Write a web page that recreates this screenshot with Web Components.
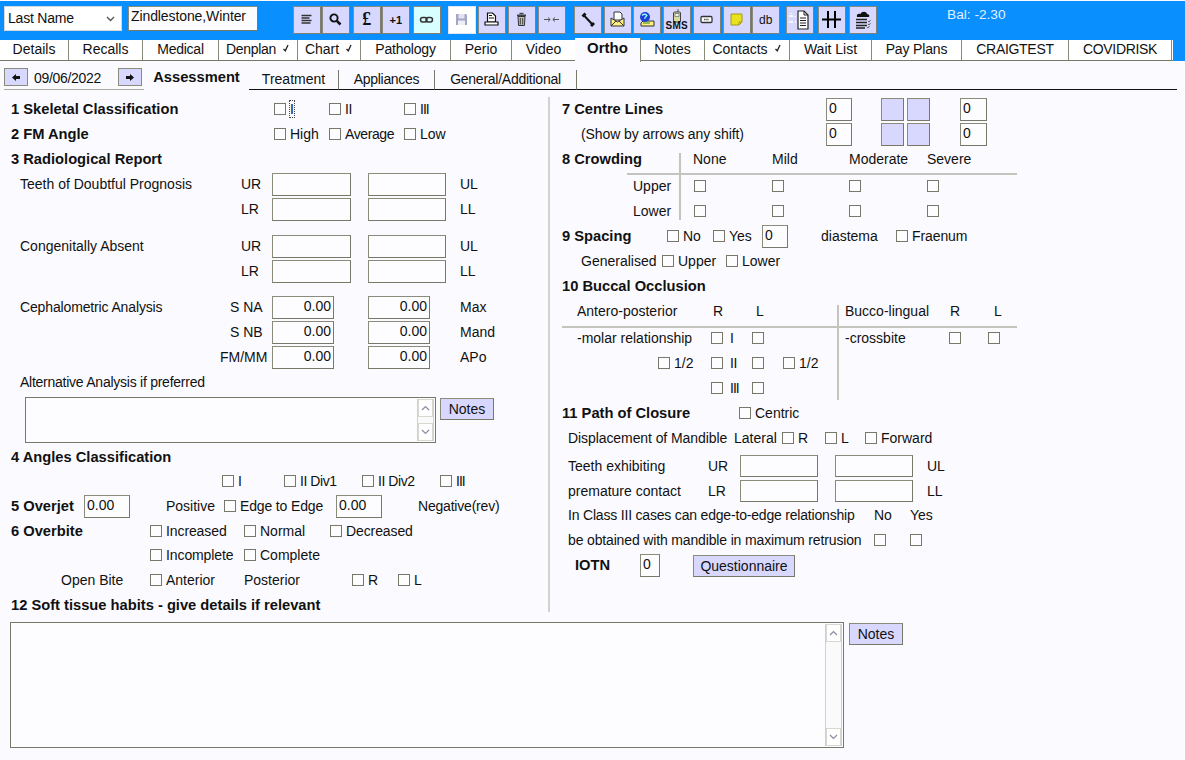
<!DOCTYPE html>
<html lang="en"><head><meta charset="utf-8"><title>Ortho</title>
<style>
html,body{margin:0;padding:0;background:#fbfbff;overflow:hidden}
body{font:14px "Liberation Sans",Arial,sans-serif;color:#111;width:1185px;height:760px}
b{font-weight:bold;font-size:14.7px}
</style></head><body>
<dental-app>
  <top-bar slot="top">
    <select-box style="width:118px;letter-spacing:-.2px">Last Name</select-box>
    <text-field w="130" h="25" style="margin-left:6px;letter-spacing:-.1px">Zindlestone,Winter</text-field>
    <tool-btn icon="lines" style="margin-left:35px"></tool-btn>
    <tool-btn icon="search" style="margin-left:1.5px"></tool-btn>
    <tool-btn style="margin-left:3.5px"><span style="font:bold 18px 'Liberation Serif',serif">£</span></tool-btn>
    <tool-btn style="margin-left:1.5px"><span style="font:bold 11px 'Liberation Sans',sans-serif">+1</span></tool-btn>
    <tool-btn icon="link" tone="cyan" style="margin-left:3.5px"></tool-btn>
    <tool-btn icon="save" tone="white" style="margin-left:7.5px"></tool-btn>
    <tool-btn icon="print" style="margin-left:2.5px"></tool-btn>
    <tool-btn icon="trash" style="margin-left:2.5px"></tool-btn>
    <tool-btn icon="arrows" style="margin-left:2.5px"></tool-btn>
    <tool-btn icon="phone" style="margin-left:8.5px"></tool-btn>
    <tool-btn icon="mail" style="margin-left:2.5px"></tool-btn>
    <tool-btn icon="web" style="margin-left:1.5px"></tool-btn>
    <tool-btn icon="sms" style="margin-left:2.5px"><span style="font:bold 10px 'Liberation Sans',sans-serif;margin-top:-3px;letter-spacing:.3px">SMS</span></tool-btn>
    <tool-btn icon="key" style="margin-left:2.5px"></tool-btn>
    <tool-btn icon="note" style="margin-left:2.5px"></tool-btn>
    <tool-btn style="margin-left:1.5px"><span style="font:12px 'Liberation Sans',sans-serif">db</span></tool-btn>
    <tool-btn icon="doc" style="margin-left:6.5px"></tool-btn>
    <tool-btn icon="hash" style="margin-left:4.5px"></tool-btn>
    <tool-btn icon="cloud" style="margin-left:3.5px"></tool-btn>
    <span style="margin:1px 0 0 70.5px;align-self:flex-start;color:#e2efff;font-size:13.7px;line-height:16px">Bal: -2.30</span>
  </top-bar>
  <tab-strip slot="tabs">
    <tab-item w="69">Details</tab-item><tab-item w="74">Recalls</tab-item><tab-item w="76" style="letter-spacing:-.25px">Medical</tab-item>
    <tab-item w="79" tick style="letter-spacing:-.3px">Denplan</tab-item><tab-item w="63" tick>Chart</tab-item><tab-item w="90" style="letter-spacing:-.2px">Pathology</tab-item>
    <tab-item w="61">Perio</tab-item><tab-item w="63" nosep>Video</tab-item><tab-item w="66" active>Ortho</tab-item>
    <tab-item w="64">Notes</tab-item><tab-item w="85" tick>Contacts</tab-item><tab-item w="82">Wait List</tab-item>
    <tab-item w="90" style="letter-spacing:-.15px">Pay Plans</tab-item><tab-item w="107" style="letter-spacing:-.3px">CRAIGTEST</tab-item><tab-item w="103" style="letter-spacing:-.35px">COVIDRISK</tab-item>
  </tab-strip>
  <sub-nav slot="sub">
    <date-nav>09/06/2022</date-nav>
    <sub-tab w="105" active>Assessment</sub-tab><sub-tab w="90">Treatment</sub-tab><sub-tab w="96" style="letter-spacing:-.3px">Appliances</sub-tab><sub-tab w="142" style="letter-spacing:-.25px">General/Additional</sub-tab><sub-tab w="600" nosep></sub-tab>
  </sub-nav>

  <form-col slot="left" base="0">
    <form-row at="11 274 329 404"><b>1 Skeletal Classification</b><check-box focus>I</check-box><check-box style="letter-spacing:-.5px">II</check-box><check-box style="letter-spacing:-1px">III</check-box></form-row>
    <form-row at="11 274 329 404"><b>2 FM Angle</b><check-box>High</check-box><check-box style="letter-spacing:-.4px">Average</check-box><check-box>Low</check-box></form-row>
    <form-row at="11"><b>3 Radiological Report</b></form-row>
    <form-row at="20 241 272 368 460"><span>Teeth of Doubtful Prognosis</span><span>UR</span><text-field w="79"></text-field><text-field w="78"></text-field><span>UL</span></form-row>
    <form-row at="241 272 368 460"><span>LR</span><text-field w="79"></text-field><text-field w="78"></text-field><span>LL</span></form-row>
    <form-row top="12" at="20 241 272 368 460"><span>Congenitally Absent</span><span>UR</span><text-field w="79"></text-field><text-field w="78"></text-field><span>UL</span></form-row>
    <form-row at="241 272 368 460"><span>LR</span><text-field w="79"></text-field><text-field w="78"></text-field><span>LL</span></form-row>
    <form-row top="11" at="20 230 272 368 460"><span style="letter-spacing:-.14px">Cephalometric Analysis</span><span>S NA</span><text-field w="62" right>0.00</text-field><text-field w="62" right>0.00</text-field><span>Max</span></form-row>
    <form-row at="230 272 368 460"><span>S NB</span><text-field w="62" right>0.00</text-field><text-field w="62" right>0.00</text-field><span>Mand</span></form-row>
    <form-row at="220 272 368 460"><span>FM/MM</span><text-field w="62" right>0.00</text-field><text-field w="62" right>0.00</text-field><span>APo</span></form-row>
    <form-row h="26" at="20"><span style="letter-spacing:-.25px">Alternative Analysis if preferred</span></form-row>
    <form-row h="49" at="25 440"><note-area w="411" h="46"></note-area><lav-button w="54" style="align-self:start;margin-top:2px">Notes</lav-button></form-row>
    <form-row at="11"><b>4 Angles Classification</b></form-row>
    <form-row h="24" at="222 284 362 440"><check-box>I</check-box><check-box style="letter-spacing:-.45px">II Div1</check-box><check-box style="letter-spacing:-.45px">II Div2</check-box><check-box style="letter-spacing:-1px">III</check-box></form-row>
    <form-row at="11 84 166 224 336 418"><b>5 Overjet</b><text-field w="46">0.00</text-field><span>Positive</span><check-box style="letter-spacing:-.15px">Edge to Edge</check-box><text-field w="46">0.00</text-field><span style="letter-spacing:-.2px">Negative(rev)</span></form-row>
    <form-row at="11 150 244 330"><b>6 Overbite</b><check-box style="letter-spacing:-.1px">Increased</check-box><check-box>Normal</check-box><check-box style="letter-spacing:-.1px">Decreased</check-box></form-row>
    <form-row h="24" at="150 244"><check-box style="letter-spacing:-.1px">Incomplete</check-box><check-box>Complete</check-box></form-row>
    <form-row at="61 150 244 352 398"><span>Open Bite</span><check-box>Anterior</check-box><span>Posterior</span><check-box>R</check-box><check-box>L</check-box></form-row>
    <form-row at="11" style="margin-bottom:-6px"><b>12 Soft tissue habits - give details if relevant</b></form-row>
  </form-col>

  <form-col slot="right" base="550">
    <form-row at="562 826 881 907 960"><b>7 Centre Lines</b><text-field w="26">0</text-field><swatch-box></swatch-box><swatch-box></swatch-box><text-field w="27">0</text-field></form-row>
    <form-row at="581 826 881 907 960"><span style="letter-spacing:-.08px">(Show by arrows any shift)</span><text-field w="26">0</text-field><swatch-box></swatch-box><swatch-box></swatch-box><text-field w="27">0</text-field></form-row>
    <rule-group>
      <rule-line x="129" y="6" h="67"></rule-line>
      <rule-line x="77" y="26" w="390"></rule-line>
      <form-row at="562 693 772 849 927"><b>8 Crowding</b><span>None</span><span>Mild</span><span>Moderate</span><span>Severe</span></form-row>
      <form-row top="2" at="633 694 772 849 927"><span>Upper</span><check-box></check-box><check-box></check-box><check-box></check-box><check-box></check-box></form-row>
      <form-row at="633 694 772 849 927"><span>Lower</span><check-box></check-box><check-box></check-box><check-box></check-box><check-box></check-box></form-row>
    </rule-group>
    <form-row at="562 667 713 762 821 896"><b>9 Spacing</b><check-box>No</check-box><check-box>Yes</check-box><text-field w="26">0</text-field><span>diastema</span><check-box style="letter-spacing:-.1px">Fraenum</check-box></form-row>
    <form-row at="581 662 726"><span>Generalised</span><check-box>Upper</check-box><check-box>Lower</check-box></form-row>
    <form-row at="562"><b>10 Buccal Occlusion</b></form-row>
    <rule-group>
      <rule-line x="287" y="6" h="95"></rule-line>
      <rule-line x="12" y="27" w="455"></rule-line>
      <form-row h="26" at="577 713 756 845 950 994"><span>Antero-posterior</span><span>R</span><span>L</span><span>Bucco-lingual</span><span>R</span><span>L</span></form-row>
      <form-row top="1" at="577 711 752 845 949 988"><span>-molar relationship</span><check-box wide>I</check-box><check-box></check-box><span>-crossbite</span><check-box></check-box><check-box></check-box></form-row>
      <form-row at="658 711 752 783"><check-box>1/2</check-box><check-box wide style="letter-spacing:-.5px">II</check-box><check-box></check-box><check-box>1/2</check-box></form-row>
      <form-row at="711 752"><check-box wide style="letter-spacing:-1px">III</check-box><check-box></check-box></form-row>
    </rule-group>
    <form-row at="562 739"><b>11 Path of Closure</b><check-box>Centric</check-box></form-row>
    <form-row at="568 734 782 825 865"><span style="letter-spacing:-.08px">Displacement of Mandible</span><span>Lateral</span><check-box>R</check-box><check-box>L</check-box><check-box>Forward</check-box></form-row>
    <form-row top="3" h="24" at="568 708 740 835 927"><span style="margin-bottom:0">Teeth exhibiting</span><span style="margin-bottom:0">UR</span><text-field w="78" h="22"></text-field><text-field w="78" h="22"></text-field><span style="margin-bottom:0">UL</span></form-row>
    <form-row at="568 708 740 835 927"><span style="margin-bottom:0">premature contact</span><span style="margin-bottom:0">LR</span><text-field w="78" h="22"></text-field><text-field w="78" h="22"></text-field><span style="margin-bottom:0">LL</span></form-row>
    <form-row at="568 874 910"><span style="letter-spacing:-.19px">In Class III cases can edge-to-edge relationship</span><span>No</span><span>Yes</span></form-row>
    <form-row at="568 874 910"><span style="letter-spacing:-.15px">be obtained with mandible in maximum retrusion</span><check-box></check-box><check-box></check-box></form-row>
    <form-row at="575 640 693"><b>IOTN</b><text-field w="20">0</text-field><lav-button w="102">Questionnaire</lav-button></form-row>
  </form-col>

  <note-area slot="bottom" w="834" h="126"></note-area>
  <lav-button slot="bottom" w="54" style="margin:1px 0 0 5px">Notes</lav-button>
</dental-app>
<script>
const reg=(name,css,html,init)=>customElements.define(name,class extends HTMLElement{
  connectedCallback(){
    if(!this.shadowRoot){
      const r=this.attachShadow({mode:'open'});
      r.innerHTML=`<style>${css}</style>${typeof html==='function'?html(this):html}`;
    }
    if(init)init(this);
  }
});
const FRAME='box-sizing:border-box;border:1.5px solid #8b8b7c;border-right-color:#77776a;border-bottom-color:#77776a;';
reg('dental-app',`
  :host{display:flex;flex-direction:column;width:1185px;height:760px;padding-top:1px;box-sizing:border-box}
  .head{background:#0a8fff}
  .cols{display:flex}
  .bot{display:flex;align-items:flex-start;padding:10px 0 0 10px}
`,`<div class="head"><slot name="top"></slot><slot name="tabs"></slot></div>
   <slot name="sub"></slot>
   <div class="cols"><slot name="left"></slot><slot name="right"></slot></div>
   <div class="bot"><slot name="bottom"></slot></div>`);
reg('top-bar',`:host{display:flex;align-items:flex-start;height:39px;padding:5px 0 0 4px;box-sizing:border-box}`,`<slot></slot>`);
reg('select-box',`:host{display:flex;align-items:center;justify-content:space-between;height:25px;box-sizing:border-box;background:#fff;padding:0 6px 2px 3px;border:1px solid #d8d8d8}
  svg{width:9px;height:6px;margin-top:2px}`,`<slot></slot><svg viewBox="0 0 9 6"><path d="M1 1l3.5 3.5L8 1" fill="none" stroke="#555" stroke-width="1.4"/></svg>`);
reg('text-field',`:host{display:block;box-sizing:border-box;background:#fdfdff;${FRAME}
    width:var(--w);height:var(--h,23px);padding:0 2px;line-height:19px;white-space:nowrap;overflow:hidden}
  :host([right]){text-align:right}`,`<slot></slot>`,e=>{e.style.setProperty('--w',e.getAttribute('w')+'px');if(e.hasAttribute('h'))e.style.setProperty('--h',e.getAttribute('h')+'px');});
const ICONS={
 lines:'<path d="M6.500 7.500h10M6.500 10h8M6.500 12.500h10M6.500 15h9" stroke="#333" stroke-width="1.4"/>',
 search:'<circle cx="10" cy="10" r="3.600" fill="none" stroke="#111" stroke-width="1.900"/><path d="M12.800 12.800l3.700 3.700" stroke="#111" stroke-width="2.500"/>',
 link:'<rect x="5.500" y="9.500" width="6.500" height="4.500" rx="2.200" fill="none" stroke="#333" stroke-width="1.500"/><rect x="11" y="9.500" width="6.500" height="4.500" rx="2.200" fill="none" stroke="#333" stroke-width="1.500"/>',
 save:'<path d="M6 6h10l1 1v10H6z" fill="#a4a6c6"/><path d="M8.500 6h6v4.500h-6z" fill="#e4e4f0"/><path d="M8 12.500h7V17H8z" fill="#eeeef6"/>',
 print:'<path d="M7.500 5h5l3 3v6h-8z" fill="#fff" stroke="#111" stroke-width="1.200"/><path d="M9 7.500h3M9 10h5" stroke="#111"/><path d="M5 14h13v3H5z" fill="#fff" stroke="#111" stroke-width="1.200"/>',
 trash:'<path d="M7 6.500h9v1.800H7z" fill="#444"/><path d="M9.500 5.500h4" stroke="#444" stroke-width="1.400"/><path d="M8 8.500h7l-.6 9H8.600z" fill="#bdbdbd" stroke="#333"/><path d="M10.300 10v6.500M12.700 10v6.500" stroke="#333" stroke-width=".9"/>',
 arrows:'<path d="M4 11.500h6M8 9.500l2.200 2-2.200 2M19 11.500h-6M15 9.500l-2.200 2 2.200 2" fill="none" stroke="#555" stroke-width="1"/>',
 phone:'<path d="M8 7.500l8 8.500" stroke="#111" stroke-width="2"/><path d="M5.500 7.500L8.500 4.500l2 2-3 3zM14 17l3-3 2 2-3 3z" fill="#111"/>',
 mail:'<path d="M8 4h6l2 2v6H8z" fill="#fff" stroke="#333"/><path d="M5 10l6.500 4L18 10v8H5z" fill="#ffee80" stroke="#333"/><path d="M5 18l5-5M18 18l-5-5" stroke="#333"/>',
 web:'<path d="M8 13h11v5H6v-3z" fill="#ffee80" stroke="#333"/><path d="M8 15h7" stroke="#2a8a2a"/><circle cx="10" cy="9" r="5" fill="#1c3fd8"/><path d="M7 7.500c2-2 4-1 5 0-1 1.500-3 2-2 3.500" fill="none" stroke="#9fe" stroke-width="1.200"/>',
 sms:'<path d="M13 1v3" stroke="#555"/><rect x="8.500" y="4" width="7" height="10" rx="1" fill="#dcdca0" stroke="#444"/><rect x="10" y="5.500" width="4" height="3" fill="#eee" stroke="#555" stroke-width=".6"/>',
 key:'<rect x="6" y="8.500" width="11" height="6" rx="1.200" fill="#fff" stroke="#333" stroke-width="1.300"/><path d="M9 11.500h5" stroke="#555" stroke-width="1.600" stroke-dasharray="1.500 .7"/>',
 note:'<path d="M6 6h11v8l-3 3H6z" fill="#e9e21d" stroke="#a59a10"/><path d="M14 17v-3h3" fill="none" stroke="#a59a10"/>',
 doc:'<path d="M10 3h6l4 4v14H10z" fill="#fff" stroke="#222" stroke-width="1.200"/><path d="M16 3v4h4" fill="none" stroke="#222"/><path d="M12 10h6M12 12.500h6M12 15h6M12 17.500h6" stroke="#222"/><path d="M1 8h4M3 5v1M1 14h4M7 8v1M7 14h1" stroke="#fff" stroke-width="1.300"/>',
 hash:'<path d="M8 3v17M15 3v17M2 11.500h19" stroke="#000" stroke-width="2"/>',
 cloud:'<path d="M6 9c-1-3 2-4 3.500-3 1-3 6-3 6.500 0 2.500 0 3 3 1.500 3z" fill="#111"/><path d="M5 11.500h11M5 14.500h11M5 17.500h11M5 20h9" stroke="#222" stroke-width="1.500"/><path d="M17 13l1 1 1.500-2M17 16l1 1 1.500-2M16 19l1 1 1.500-2" fill="none" stroke="#444" stroke-width=".8"/>'
};
reg('tool-btn',`:host{display:flex;flex-direction:column;align-items:center;justify-content:center;width:27.500px;height:27.500px;box-sizing:border-box;background:#d8d8ff;flex:none;overflow:hidden;
    border:1.500px solid #7f7f74;border-top-color:#8a8a80;border-left-color:#8a8a80;color:#111}
  :host([tone=cyan]){background:#d8ffff}
  :host([tone=white]){background:#fff;border-color:#e4e4ee}
  svg{width:23px;height:23px;flex:none}
  :host([icon=sms]) svg{height:15px;width:23px}`,e=>{
   const i=e.getAttribute('icon');const vb=i==='sms'?'0 0 23 15':'0 0 23 23';
   return (i?`<svg viewBox="${vb}">${ICONS[i]}</svg>`:'')+'<slot></slot>';});
reg('tab-strip',`:host{display:flex;height:21px;width:1173px;background:#fff;border-bottom:1px solid #77776a;box-sizing:border-box}`,`<slot></slot>`);
reg('tab-item',`:host{display:flex;align-items:center;justify-content:center;gap:6px;box-sizing:border-box;width:var(--w);height:20px;white-space:nowrap;background:#fff;border-right:1.500px solid #8b8b7c;padding-bottom:3px}
  :host([nosep]){border-right:0}
  :host([active]){font:bold 15px "Liberation Sans",sans-serif;height:24px;margin-top:-2px;background:#fbfbff;position:relative;z-index:1;padding-bottom:6px}
  svg{width:8px;height:9px;margin-top:-1px}`,e=>'<slot></slot>'+(e.hasAttribute('tick')?'<svg viewBox="0 0 8 9"><path d="M1.500 5l1.800 1.800L6 1" fill="none" stroke="#222" stroke-width="1.300"/></svg>':''),
  e=>e.style.setProperty('--w',e.getAttribute('w')+'px'));
reg('sub-nav',`:host{display:flex;align-items:flex-start;height:36px;padding:6px 0 0 4px;box-sizing:border-box}`,`<slot></slot>`);
reg('date-nav',`:host{display:flex;align-items:flex-start;box-sizing:border-box;width:140px;height:23px;padding-top:1px;border-bottom:1px solid #a9a99c}
  .b{width:24px;height:18px;box-sizing:border-box;background:#d8d8ff;border:1px solid #8b8b7c;display:flex;align-items:center;justify-content:center;flex:none}
  .t{width:90px;padding:2px 0 0 6px;box-sizing:border-box;letter-spacing:-.3px}
  svg{width:10px;height:9px}`,
  `<div class="b"><svg viewBox="0 0 10 9"><path d="M1 4.500L5 1v2h4v3H5v2z" fill="#111"/></svg></div><div class="t"><slot></slot></div><div class="b"><svg viewBox="0 0 10 9"><path d="M9 4.500L5 1v2H1v3h4v2z" fill="#111"/></svg></div>`);
reg('sub-tab',`:host{display:flex;align-items:center;justify-content:center;box-sizing:border-box;width:var(--w);height:20px;margin-top:3px;white-space:nowrap;border-right:1px solid #77776a;border-bottom:1px solid #111;padding-bottom:2px}
  :host([nosep]){border-right:0}
  :host([active]){font:bold 14.700px "Liberation Sans",sans-serif;border-bottom:0;height:19px;margin-top:1px;padding-bottom:2px;border-right:0}`,`<slot></slot>`,
  e=>e.style.setProperty('--w',e.getAttribute('w')+'px'));
reg('form-col',`:host{display:block;box-sizing:border-box}
  :host([base="0"]){width:550px;border-right:2px solid #d2d2cc}
  :host([base="550"]){flex:1}`,`<slot></slot>`);
reg('form-row',`:host{display:grid;align-items:center;height:var(--h,25px);box-sizing:border-box}
  ::slotted(*){white-space:nowrap;justify-self:start}
  ::slotted(:not(text-field):not(swatch-box):not(lav-button)){margin-bottom:2px}`,`<slot></slot>`,e=>{
    const col=e.closest('form-col');const base=col?+col.getAttribute('base'):0;
    const at=e.getAttribute('at').split(' ').map(Number);
    e.style.paddingLeft=(at[0]-base)+'px';
    const c=[];for(let i=1;i<at.length;i++)c.push((at[i]-at[i-1])+'px');c.push('auto');
    e.style.gridTemplateColumns=c.join(' ');
    if(e.hasAttribute('h'))e.style.setProperty('--h',e.getAttribute('h')+'px');
    if(e.hasAttribute('top'))e.style.marginTop=e.getAttribute('top')+'px';
  });
reg('check-box',`:host{display:inline-flex;align-items:center;white-space:nowrap}
  input{appearance:none;-webkit-appearance:none;margin:0 4px 0 0;width:12px;height:12px;box-sizing:border-box;border:1px solid #77776a;background:#fdfdff;flex:none}
  :host([wide]) input{margin-right:7px}
  :host([focus]) .l{outline:1px dotted #444;outline-offset:0}
  :host(:empty) input{margin-right:0}`,`<input type="checkbox" tabindex="-1"><span class="l"><slot></slot></span>`);
reg('lav-button',`:host{display:flex;align-items:center;justify-content:center;box-sizing:border-box;width:var(--w);height:22px;background:#d8d8ff;${FRAME}}`,`<slot></slot>`,
  e=>e.style.setProperty('--w',e.getAttribute('w')+'px'));
reg('swatch-box',`:host{display:block;box-sizing:border-box;width:23px;height:23px;background:#d8d8ff;${FRAME}}`,``);
reg('note-area',`:host{display:flex;justify-content:flex-end;box-sizing:border-box;width:var(--w);height:var(--h);background:#fdfdff;border:1px solid #77776a;flex:none}
  .sb{width:17px;box-sizing:border-box;display:flex;flex-direction:column;justify-content:space-between;background:#fafafa;border:1px solid #d0d0ca;border-width:0 1px;margin:1px}
  .a{height:16px;border:1px solid #d8d8d2;display:flex;align-items:center;justify-content:center;background:#fff}
  svg{width:9px;height:6px}`,
  `<div class="sb"><div class="a"><svg viewBox="0 0 9 6"><path d="M1 5l3.500-3.500L8 5" fill="none" stroke="#8a8aa6" stroke-width="1.200"/></svg></div><div class="a"><svg viewBox="0 0 9 6"><path d="M1 1l3.500 3.500L8 1" fill="none" stroke="#8a8aa6" stroke-width="1.200"/></svg></div></div>`,
  e=>{e.style.setProperty('--w',e.getAttribute('w')+'px');e.style.setProperty('--h',e.getAttribute('h')+'px');});
reg('rule-group',`:host{display:block;position:relative}`,`<slot></slot>`);
reg('rule-line',`:host{display:block;position:absolute;background:#c4c4bc}`,``,e=>{
  e.style.left=e.getAttribute('x')+'px';e.style.top=e.getAttribute('y')+'px';
  e.style.width=(e.getAttribute('w')||1.5)+'px';e.style.height=(e.getAttribute('h')||1.5)+'px';});
</script>
</body></html>
